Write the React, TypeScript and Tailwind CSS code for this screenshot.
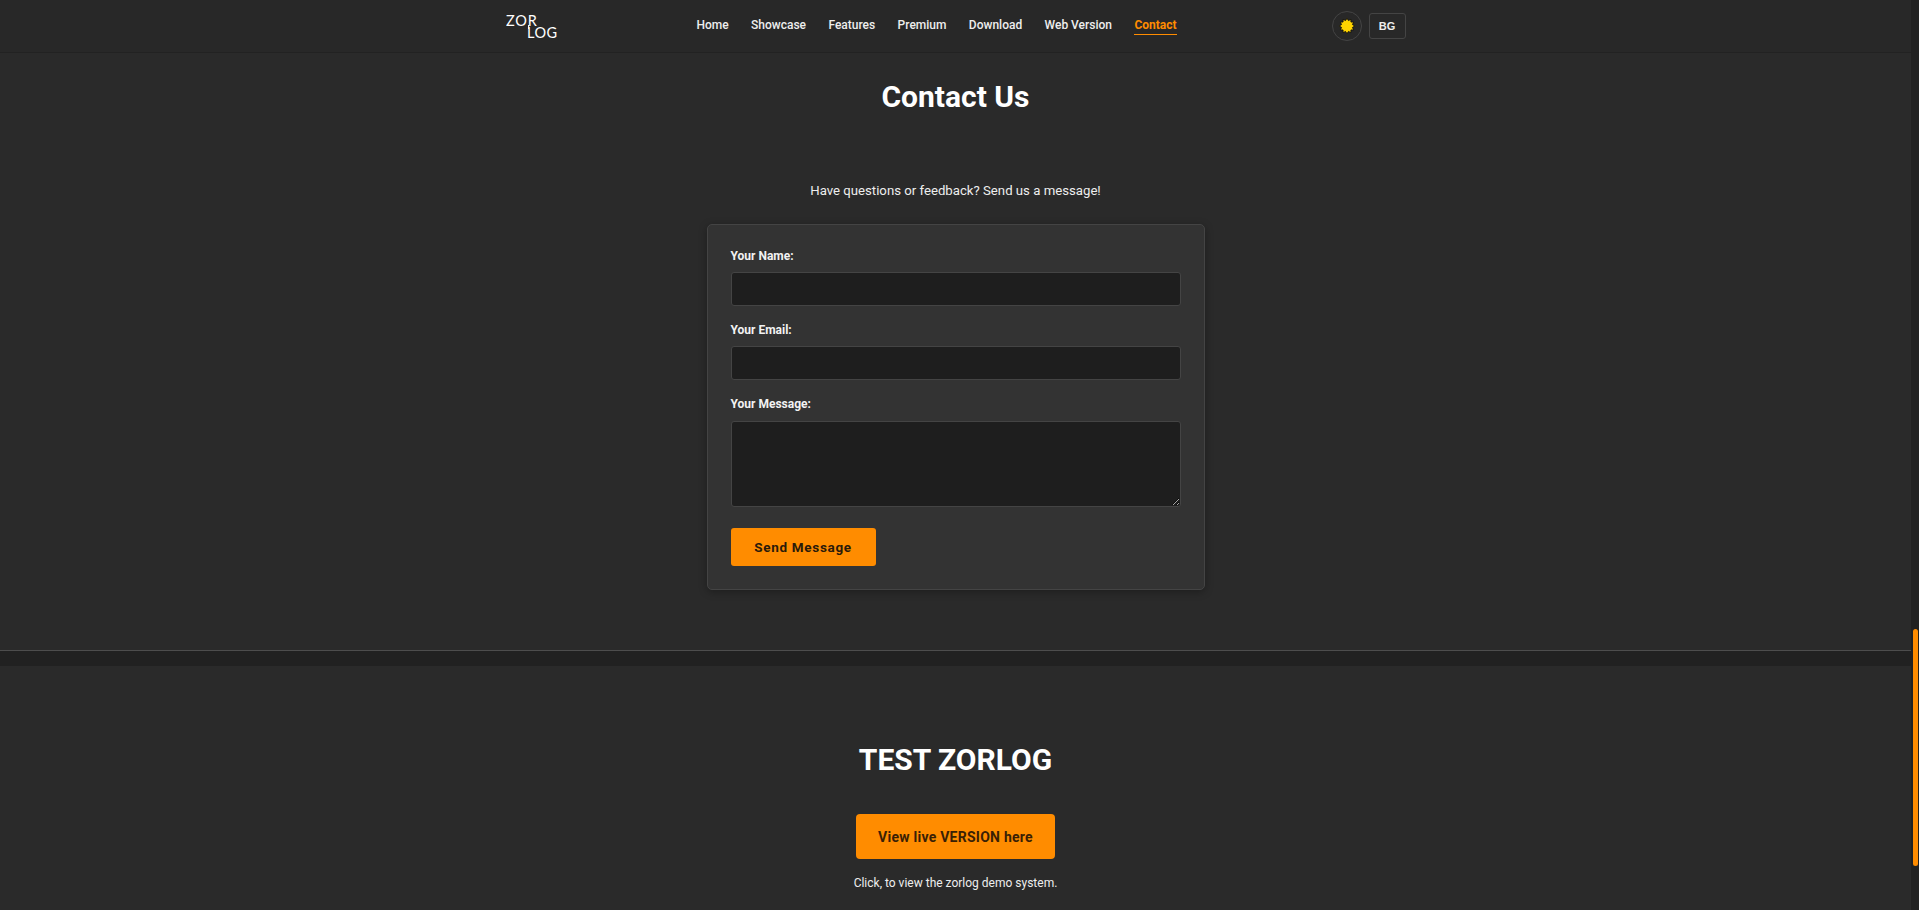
const NAV_LINKS = ['Home', 'Showcase', 'Features', 'Premium', 'Download', 'Web Version'];

const SUN_POINTS = Array.from({ length: 24 }, (_, i) => {
  const r = i % 2 === 0 ? 7.8 : 5.6;
  const a = (i * Math.PI) / 12;
  return `${(8 + r * Math.cos(a)).toFixed(2)},${(8 + r * Math.sin(a)).toFixed(2)}`;
}).join(' ');

const Logo = () => (
  <svg width="52" height="28" viewBox="0 0 52 28" className="block text-white">
    <text x="0" y="14" fill="currentColor" fontFamily="Lato, sans-serif" fontSize="14.5" letterSpacing="0.8">
      ZOR
    </text>
    <path d="M22.6 13 V17" stroke="#fff" strokeWidth="1.1" fill="none" />
    <text x="21" y="25.5" fill="currentColor" fontFamily="Lato, sans-serif" fontSize="14.5" letterSpacing="0.5">
      LOG
    </text>
  </svg>
);

const Header = () => (
  <header className="h-[53px] bg-[#282828] border-b border-[#222]">
    <div className="mx-auto w-[900px] h-full flex items-center justify-between">
      <Logo />
      <nav className="flex items-center gap-[22.4px] mr-[16px] mb-[2px] text-xs font-medium text-[#eee]">
        {NAV_LINKS.map((link) => (
          <a key={link} className="py-1">
            {link}
          </a>
        ))}
        <a className="py-[1px] text-[#ff8c00] font-bold border-b border-[#ff8c00]">Contact</a>
      </nav>
      <div className="flex items-center gap-[7px]">
        <button className="w-[30px] h-[30px] rounded-full border border-[#444] flex items-center justify-center">
          <svg width="16" height="16" viewBox="0 0 16 16">
            <polygon points={SUN_POINTS} fill="#ffd400" stroke="#111" strokeWidth="0.9" />
          </svg>
        </button>
        <button className="w-[37px] h-[26px] rounded-[3px] border border-[#444] font-['Liberation_Sans',sans-serif] text-[11px] font-bold text-[#eee]">
          BG
        </button>
      </div>
    </div>
  </header>
);

const Field = ({ label }: { label: string }) => (
  <div>
    <label className="block mb-[8px] text-xs font-bold text-[#f2f2f2]">{label}</label>
    <input className="block w-full h-[34px] bg-[#1e1e1e] border border-[#444] rounded-[3px]" />
  </div>
);

const ContactForm = () => (
  <form className="w-[498px] mx-auto mt-[23px] pt-[23px] px-[23px] pb-[23px] bg-[#333] border border-[#444] rounded-[5px] shadow-[0_2px_8px_rgba(0,0,0,0.3)] flex flex-col gap-[16px] text-left">
    <Field label="Your Name:" />
    <Field label="Your Email:" />
    <div>
      <label className="block mb-[9px] text-xs font-bold text-[#f2f2f2]">Your Message:</label>
      <textarea className="block w-full h-[86px] bg-[#1e1e1e] border border-[#444] rounded-[3px]" />
    </div>
    <button
      type="button"
      className="self-start mt-[5px] w-[145px] h-[38px] bg-[#ff8c00] rounded-[3px] text-[13.5px] font-bold tracking-[0.7px] text-[#2a1a0a]"
    >
      Send Message
    </button>
  </form>
);

const App = () => (
  <div className="flex h-[910px] overflow-hidden bg-[#2a2a2a] font-['Roboto',sans-serif] text-[#eee]">
    <div className="flex-1 min-w-0">
      <Header />
      <section className="h-[598px] pt-6 border-b border-[#4d4d4d] text-center">
        <h1 className="text-[30px] leading-[40px] font-bold text-white">Contact Us</h1>
        <p className="mt-[64px] text-[13.2px] leading-5">Have questions or feedback? Send us a message!</p>
        <ContactForm />
      </section>
      <div className="h-[15px] bg-[#212121]" />
      <section className="pt-[74px] text-center">
        <h2 className="text-[30px] leading-10 font-bold text-white">TEST ZORLOG</h2>
        <button className="mt-[34px] w-[199px] h-[45px] bg-[#ff8c00] rounded-[4px] text-sm font-bold tracking-[0.25px] text-[#3a1f05]">
          View live VERSION here
        </button>
        <p className="mt-[15px] text-xs leading-[18px]">Click, to view the zorlog demo system.</p>
      </section>
    </div>
    <aside className="w-2 bg-[#212121] pl-0.5 pt-[629px] pb-[44px]">
      <div className="h-[237px] w-[5px] rounded-full bg-[#ff8c00]" />
    </aside>
  </div>
);

export default App;
